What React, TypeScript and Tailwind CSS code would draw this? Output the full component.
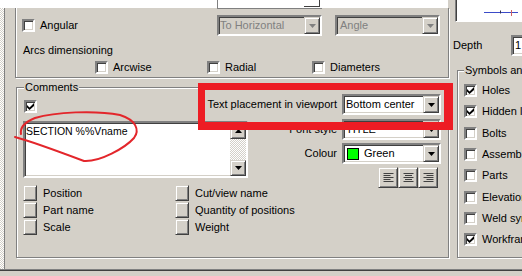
import React from "react";

const sunken =
  "border-2 border-t-[#808080] border-l-[#808080] border-b-white border-r-white shadow-[inset_1px_1px_0_#404040,inset_-1px_-1px_0_#d4d0c8]";
const raised =
  "bg-[#d4d0c8] border border-t-[#d4d0c8] border-l-[#d4d0c8] border-b-[#404040] border-r-[#404040] shadow-[inset_1px_1px_0_#ffffff,inset_-1px_-1px_0_#808080]";
const etched = "border border-[#808080] shadow-[inset_1px_1px_0_#ffffff,1px_1px_0_#ffffff]";
const hatch =
  "bg-[image:repeating-conic-gradient(#ffffff_0_25%,#d4d0c8_0_50%)] bg-[length:2px_2px]";

function Check({ on }: { on?: boolean }) {
  return (
    <span className={`w-[13px] h-[13px] shrink-0 bg-white flex items-center justify-center ${sunken}`}>
      {on && (
        <svg width="7" height="7" viewBox="0 0 7 7">
          <path d="M0 2L2.5 4.5L7 0V3L2.5 7L0 4.5Z" fill="#000" />
        </svg>
      )}
    </span>
  );
}

function Arrow({ up, grey }: { up?: boolean; grey?: boolean }) {
  return (
    <svg width="7" height="4" viewBox="0 0 7 4">
      <path d={up ? "M0 4h7L3.5 0z" : "M0 0h7L3.5 4z"} fill={grey ? "#808080" : "#000"} />
    </svg>
  );
}

function Combo({
  className = "",
  disabled,
  children,
}: {
  className?: string;
  disabled?: boolean;
  children: React.ReactNode;
}) {
  return (
    <div
      className={`h-[21px] shrink-0 flex ${sunken} ${
        disabled ? "bg-[#d4d0c8] text-[#808080]" : "bg-white text-black"
      } ${className}`}
    >
      <div className="flex-1 flex items-center pl-[1px] overflow-hidden whitespace-nowrap">{children}</div>
      <div className={`w-[16px] flex items-center justify-center ${raised}`}>
        <Arrow grey={disabled} />
      </div>
    </div>
  );
}

function AlignBtn({ mode }: { mode: "l" | "c" | "r" }) {
  const lines = [10, 7, 10, 7, 10];
  return (
    <div className={`w-[20px] h-[21px] flex items-center justify-center ${raised}`}>
      <svg width="11" height="10" viewBox="0 0 11 10">
        {lines.map((len, i) => {
          const x = mode === "l" ? 0.5 : mode === "c" ? 0.5 + (10 - len) / 2 : 0.5 + 10 - len;
          return <line key={i} x1={x} x2={x + len} y1={0.5 + i * 2} y2={0.5 + i * 2} stroke="#404040" />;
        })}
      </svg>
    </div>
  );
}

function ListItem({ label }: { label: string }) {
  return (
    <div className="h-[16px] flex items-center gap-[6px] whitespace-nowrap">
      <div className={`w-[14px] h-[16px] shrink-0 ${raised}`} />
      <span>{label}</span>
    </div>
  );
}

export default function App() {
  const symbols: [string, boolean][] = [
    ["Holes", true],
    ["Hidden lines", true],
    ["Bolts", false],
    ["Assemblies", false],
    ["Parts", false],
    ["Elevations", false],
    ["Weld symbols", false],
    ["Workframe", true],
  ];

  return (
    <div className="w-[522px] h-[276px] relative overflow-hidden bg-[#d4d0c8] text-black text-[11px] leading-[13px] font-['Liberation_Sans',Arial,sans-serif] flex flex-col select-none">
      <div className="h-[269px] flex">
        {/* left part */}
        <div className="w-[450px] shrink-0 flex flex-col">
          <div className="w-[448px] h-[8px] bg-white flex">
            <div className="ml-[217px] w-[105px] h-[9px] border-l border-b border-[#808080] flex justify-end">
              <div className="w-[16px] mr-[2px] h-[7px] border-r border-b border-[#404040]" />
            </div>
          </div>
          <div className="flex-1 flex">
            <div className={`w-[5px] shrink-0 border-r border-[#808080] ${hatch}`} />
            <div className="flex-1 flex flex-col">
              {/* upper panel */}
              <div className="ml-[10px] w-[434px] h-[70px] border-l border-r border-b border-[#808080] shadow-[inset_1px_0_0_#ffffff,1px_1px_0_#ffffff] flex flex-col">
                <div className="mt-[7px] h-[21px] flex items-center pl-[6px]">
                  <div className="w-[195px] flex items-center gap-[5px]">
                    <Check />
                    <span>Angular</span>
                  </div>
                  <Combo className="w-[105px]" disabled>
                    To Horizontal
                  </Combo>
                  <Combo className="w-[105px] ml-[13px]" disabled>
                    <span className="pl-[2px]">Angle</span>
                  </Combo>
                </div>
                <div className="mt-[8px] pl-[7px]">Arcs dimensioning</div>
                <div className="mt-[4px] h-[13px] flex items-center pl-[79px]">
                  <div className="w-[112px] flex items-center gap-[5px]">
                    <Check />
                    <span>Arcwise</span>
                  </div>
                  <div className="w-[105px] flex items-center gap-[5px]">
                    <Check />
                    <span>Radial</span>
                  </div>
                  <div className="flex items-center gap-[5px]">
                    <Check />
                    <span>Diameters</span>
                  </div>
                </div>
              </div>

              {/* comments group */}
              <div className={`mt-[9px] ml-[11px] w-[433px] h-[171px] relative ${etched}`}>
                <span className="absolute -top-[7px] left-[7px] px-[1px] bg-[#d4d0c8]">Comments</span>
                <div className="h-full flex">
                  <div className="ml-[6px] w-[225px] shrink-0 flex flex-col">
                    <div className="ml-[1px] mt-[12px]">
                      <Check on />
                    </div>
                    <div className={`mt-[8px] h-[57px] w-[225px] bg-white flex ${sunken}`}>
                      <div className="flex-1 pl-[1px] pt-[2px] whitespace-nowrap text-[10.5px]">SECTION %%Vname</div>
                      <div className="w-[16px] flex flex-col">
                        <div className={`h-[16px] flex items-center justify-center ${raised}`}>
                          <Arrow up />
                        </div>
                        <div className={`flex-1 ${hatch}`} />
                        <div className={`h-[16px] flex items-center justify-center ${raised}`}>
                          <Arrow />
                        </div>
                      </div>
                    </div>
                    <div className="mt-[7px] flex">
                      <div className="w-[152px] shrink-0 flex flex-col gap-[1px]">
                        <ListItem label="Position" />
                        <ListItem label="Part name" />
                        <ListItem label="Scale" />
                      </div>
                      <div className="shrink-0 flex flex-col gap-[1px]">
                        <ListItem label="Cut/view name" />
                        <ListItem label="Quantity of positions" />
                        <ListItem label="Weight" />
                      </div>
                    </div>
                  </div>

                  <div className="flex-1 min-w-0 pr-[7px] flex flex-col">
                    <div className="mt-[6px] h-[21px] flex justify-end items-center gap-[5px]">
                      <span className="shrink-0 whitespace-nowrap">Text placement in viewport</span>
                      <Combo className="w-[99px]">
                        <span className="pl-[1px]">Bottom center</span>
                      </Combo>
                    </div>
                    <div className="mt-[4px] h-[21px] flex justify-end items-center gap-[5px]">
                      <span className="shrink-0 whitespace-nowrap">Font style</span>
                      <Combo className="w-[99px]">
                        <span className="pl-[1px]">TITLE</span>
                      </Combo>
                    </div>
                    <div className="mt-[3px] h-[21px] flex justify-end items-center gap-[5px]">
                      <span className="shrink-0 whitespace-nowrap">Colour</span>
                      <Combo className="w-[99px]">
                        <span className="ml-[2px] w-[12px] h-[12px] border border-black bg-[#00ff00] shrink-0" />
                        <span className="ml-[5px]">Green</span>
                      </Combo>
                    </div>
                    <div className="mt-[3px] pr-[3px] flex justify-end">
                      <AlignBtn mode="l" />
                      <AlignBtn mode="c" />
                      <AlignBtn mode="r" />
                    </div>
                  </div>
                </div>
              </div>
            </div>
          </div>
        </div>

        {/* right part */}
        <div className="flex-1 min-w-0 flex flex-col">
          <div className="ml-[5px] h-[22px] bg-white border-l border-b border-l-[#808080] border-b-white shadow-[inset_1px_0_0_#404040]">
            <svg width="70" height="21" viewBox="0 0 70 21" className="block">
              <line x1="28" x2="62" y1="12.5" y2="12.5" stroke="#3b4bc8" />
              <line x1="44.5" x2="44.5" y1="10.5" y2="13.5" stroke="#303050" />
              <line x1="55.5" x2="55.5" y1="10" y2="16" stroke="#d06060" />
            </svg>
          </div>
          <div className="mt-[13px] h-[21px] flex items-center">
            <span className="ml-[3px] w-[58px] shrink-0">Depth</span>
            <div className={`w-[40px] h-[21px] shrink-0 bg-white flex items-center pl-[2px] ${sunken}`}>1</div>
          </div>
          <div className={`mt-[14px] ml-[7px] w-[100px] h-[188px] shrink-0 relative ${etched}`}>
            <span className="absolute -top-[7px] left-[6px] px-[1px] bg-[#d4d0c8] whitespace-nowrap">Symbols and</span>
            <div className="pl-[6px] pt-[9px] grid auto-rows-[21.3px]">
              {symbols.map(([label, on]) => (
                <div key={label} className="flex items-center gap-[5px] whitespace-nowrap">
                  <Check on={on} />
                  <span>{label}</span>
                </div>
              ))}
            </div>
          </div>
        </div>
      </div>
      <div className="h-[2px] border-t border-t-[#808080] border-b border-b-[#404040]" />

      {/* annotations drawn over the dialog */}
      <div className="absolute left-[198px] top-[83px] w-[255px] h-[47px] border-[#ed1c24] border-t-[7px] border-l-[7px] border-r-[9px] border-b-[8px]" />
      <svg className="absolute inset-0 pointer-events-none" width="522" height="276" viewBox="0 0 522 276">
        <path
          d="M15 137C30 141 60 152 84 161C100 162 125 148 134 138C140 130 136 120 120 115C95 110 55 112 35 118C25 122 20 128 21 134"
          fill="none"
          stroke="#e3262b"
          strokeWidth="2"
          strokeLinecap="round"
        />
      </svg>
    </div>
  );
}
